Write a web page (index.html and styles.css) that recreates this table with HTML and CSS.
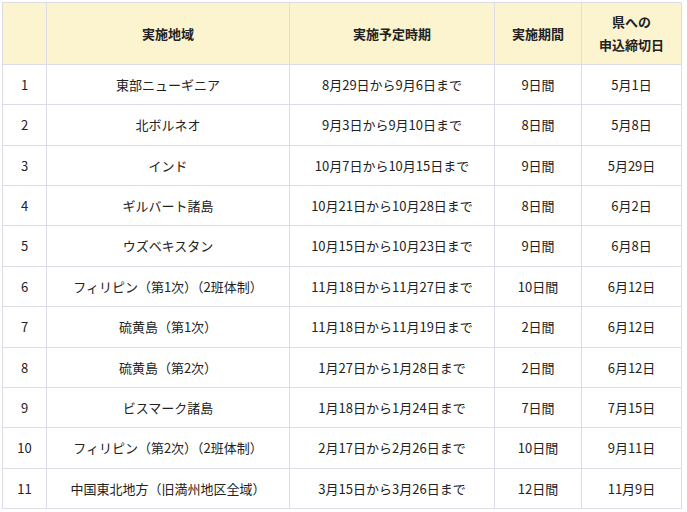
FILE: index.html
```html
<!DOCTYPE html>
<html lang="ja">
<head>
<meta charset="utf-8">
<link rel="stylesheet" href="styles.css">
</head>
<body>
<div class="wrap">
<table class="sched">
<colgroup>
<col class="c-no"><col class="c-area"><col class="c-period"><col class="c-days"><col class="c-due">
</colgroup>
<thead>
<tr><th></th><th>実施地域</th><th>実施予定時期</th><th>実施期間</th><th>県への<br>申込締切日</th></tr>
</thead>
<tbody>
<tr><td>1</td><td>東部ニューギニア</td><td>8月29日から9月6日まで</td><td>9日間</td><td>5月1日</td></tr>
<tr><td>2</td><td>北ボルネオ</td><td>9月3日から9月10日まで</td><td>8日間</td><td>5月8日</td></tr>
<tr><td>3</td><td>インド</td><td>10月7日から10月15日まで</td><td>9日間</td><td>5月29日</td></tr>
<tr><td>4</td><td>ギルバート諸島</td><td>10月21日から10月28日まで</td><td>8日間</td><td>6月2日</td></tr>
<tr><td>5</td><td>ウズベキスタン</td><td>10月15日から10月23日まで</td><td>9日間</td><td>6月8日</td></tr>
<tr><td>6</td><td>フィリピン（第1次）（2班体制）</td><td>11月18日から11月27日まで</td><td>10日間</td><td>6月12日</td></tr>
<tr><td>7</td><td>硫黄島（第1次）</td><td>11月18日から11月19日まで</td><td>2日間</td><td>6月12日</td></tr>
<tr><td>8</td><td>硫黄島（第2次）</td><td>1月27日から1月28日まで</td><td>2日間</td><td>6月12日</td></tr>
<tr><td>9</td><td>ビスマーク諸島</td><td>1月18日から1月24日まで</td><td>7日間</td><td>7月15日</td></tr>
<tr><td>10</td><td>フィリピン（第2次）（2班体制）</td><td>2月17日から2月26日まで</td><td>10日間</td><td>9月11日</td></tr>
<tr><td>11</td><td>中国東北地方（旧満州地区全域）</td><td>3月15日から3月26日まで</td><td>12日間</td><td>11月9日</td></tr>
</tbody>
</table>
</div>
</body>
</html>
```

FILE: styles.css
```css
html, body {
  margin: 0;
  padding: 0;
  background: #ffffff;
}
.wrap {
  padding: 2px 0 0 2px;
}
.sched {
  border-collapse: collapse;
  table-layout: fixed;
  width: 680px;
  font-family: "Noto Sans CJK JP", "Noto Sans", sans-serif;
  font-size: 13px;
  line-height: 1.8;
  color: #222222;
}
.c-no { width: 44px; }
.c-area { width: 243px; }
.c-period { width: 205px; }
.c-days { width: 87px; }
.c-due { width: 100px; }
.sched th,
.sched td {
  border: 1px solid #dcdce8;
  padding: 8px 4px;
  text-align: center;
  vertical-align: middle;
}
.sched th {
  background: #fcf3cf;
  font-weight: bold;
  padding-top: 7px;
  padding-bottom: 7px;
}
```
